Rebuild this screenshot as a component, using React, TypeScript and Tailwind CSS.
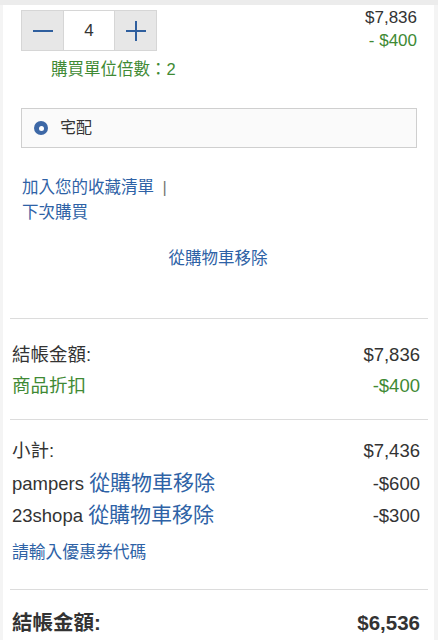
export default function App() {
  const font = { fontFamily: '"Liberation Sans", "Noto Sans CJK TC", sans-serif' };
  return (
    <div className="min-h-screen bg-[#f4f4f4] text-[#333]" style={font}>
      <div className="h-[5px] bg-[#ececec]" />
      <div className="bg-white ml-[3px] mr-[4px]">
        {/* item controls */}
        <div className="pl-[18px] pr-[17px]">
          <div className="flex justify-between items-start">
            <div className="pt-[5px]">
              <div className="flex h-[41px] w-[136px] border border-[#d6d6d6]">
                <button className="w-[41px] bg-[#e7e7e7] flex items-center justify-center">
                  <span className="block w-[20px] h-[2px] bg-[#2f5f9e]" />
                </button>
                <div className="flex-1 bg-white border-x border-[#d6d6d6] flex items-center justify-center text-[17px]">
                  4
                </div>
                <button className="w-[41px] bg-[#e7e7e7] flex items-center justify-center relative">
                  <span className="block w-[20px] h-[2px] bg-[#2f5f9e]" />
                  <span className="absolute w-[2px] h-[20px] bg-[#2f5f9e]" />
                </button>
              </div>
              <div className="pl-[30px] pt-[7px] text-[16.5px] leading-[22px] text-[#3f8a34]">
                購買單位倍數：2
              </div>
            </div>
            <div className="text-right text-[17px] leading-[23px]">
              <div className="pt-[1px]">$7,836</div>
              <div className="text-[#3f8a34]">- $400</div>
            </div>
          </div>

          <div className="mt-[28px] h-[40px] border border-[#cfcfcf] bg-[#fafafa] flex items-center pl-[12px] gap-[12px]">
            <span className="w-[14px] h-[14px] rounded-full bg-[#3d68a6] flex items-center justify-center">
              <span className="w-[5px] h-[5px] rounded-full bg-white" />
            </span>
            <span className="text-[16px]">宅配</span>
          </div>

          <div className="pt-[27px] text-[16.5px] leading-[25px] text-[#2e62a6]">
            <div className="pl-[1px]">
              加入您的收藏清單 <span className="text-[#777] ml-[4px]">|</span>
            </div>
            <div className="pl-[1px]">下次購買</div>
          </div>

          <div className="text-center pt-[21px] pb-[47px] text-[16.5px] leading-[25px] text-[#2e62a6] pr-[2px]">
            從購物車移除
          </div>
        </div>

        {/* totals */}
        <div className="pl-[7px] pr-[6px]">
          <div className="border-t border-[#dcdcdc]" />
          <div className="pl-[2px] pr-[8px] pt-[20px] pb-[18px] text-[18.5px] leading-[31px]">
            <div className="flex justify-between">
              <span>結帳金額:</span>
              <span>$7,836</span>
            </div>
            <div className="flex justify-between text-[#3f8a34]">
              <span>商品折扣</span>
              <span>-$400</span>
            </div>
          </div>
          <div className="border-t border-[#dcdcdc]" />
          <div className="pl-[2px] pr-[8px] pt-[15px] text-[18.5px] leading-[31.5px]">
            <div className="flex justify-between">
              <span>小計:</span>
              <span>$7,436</span>
            </div>
            <div className="flex justify-between items-baseline">
              <span>
                pampers <span className="text-[21px] text-[#2e62a6]">從購物車移除</span>
              </span>
              <span>-$600</span>
            </div>
            <div className="flex justify-between items-baseline">
              <span>
                23shopa <span className="text-[21px] text-[#2e62a6]">從購物車移除</span>
              </span>
              <span>-$300</span>
            </div>
            <div className="pt-[8px] pb-[23px] text-[16.8px] leading-[26px] text-[#2e62a6]">
              請輸入優惠券代碼
            </div>
          </div>
          <div className="border-t border-[#dcdcdc]" />
          <div className="pl-[2px] pr-[8px] pt-[18px] pb-[10px] flex justify-between font-bold text-[20.5px] leading-[30px]">
            <span>結帳金額:</span>
            <span>$6,536</span>
          </div>
        </div>
      </div>
    </div>
  );
}
